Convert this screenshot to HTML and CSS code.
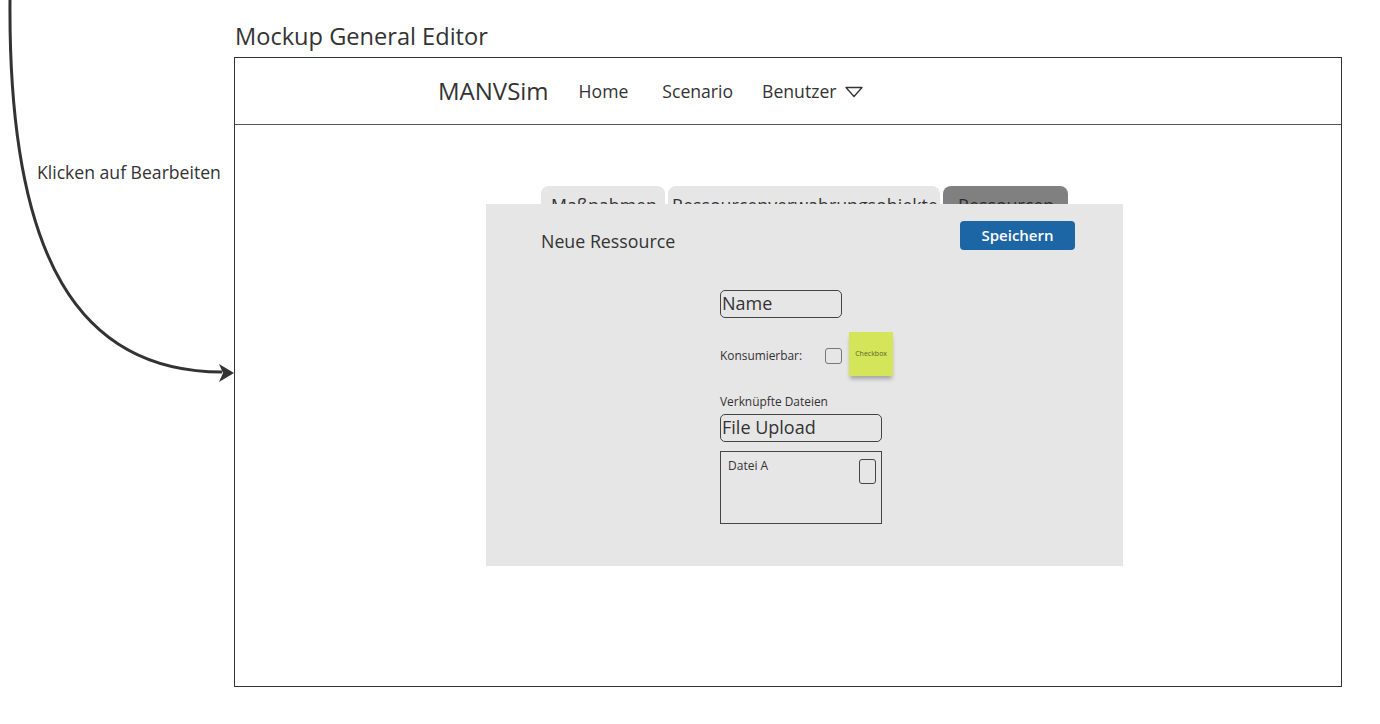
FILE: index.html
```html
<!DOCTYPE html>
<html lang="de">
<head>
<meta charset="utf-8">
<title>Mockup General Editor</title>
<link rel="stylesheet" href="styles.css">
</head>
<body>
<div class="canvas">
  <svg class="arrow" width="240" height="390" viewBox="0 0 240 390">
    <path d="M10 0 C 8 260, 80 372, 222 372" fill="none" stroke="#333" stroke-width="3"/>
    <path d="M234 373 L219 364 L223 373 L219 382 Z" fill="#333"/>
  </svg>
  <div class="note-label">Klicken auf Bearbeiten</div>
  <div class="title">Mockup General Editor</div>

  <div class="frame">
    <header class="topbar">
      <nav class="nav">
        <span class="brand">MANVSim</span>
        <span class="nav-item">Home</span>
        <span class="nav-item">Scenario</span>
        <span class="nav-item dropdown">Benutzer
          <svg class="caret" width="18" height="12" viewBox="0 0 18 12"><path d="M1 1.5 H17 L9 10.5 Z" fill="none" stroke="#333" stroke-width="1.3" stroke-linejoin="round"/></svg>
        </span>
      </nav>
    </header>

    <main class="content">
      <div class="editor">
        <div class="tabs">
          <div class="tab tab-1">Maßnahmen</div>
          <div class="tab tab-2">Ressourcenverwahrungsobjekte</div>
          <div class="tab tab-3 active">Ressourcen</div>
        </div>
        <section class="panel">
          <div class="panel-head">
            <h2 class="panel-title">Neue Ressource</h2>
            <button class="btn-save">Speichern</button>
          </div>
          <div class="form">
            <div class="input name-input">Name</div>
            <div class="check-row">
              <span class="small-label">Konsumierbar:</span>
              <span class="checkbox"></span>
              <span class="sticky">Checkbox</span>
            </div>
            <div class="small-label files-label">Verknüpfte Dateien</div>
            <div class="input upload-input">File Upload</div>
            <div class="file-list">
              <span class="file-name">Datei A</span>
              <span class="file-toggle"></span>
            </div>
          </div>
        </section>
      </div>
    </main>
  </div>
</div>
</body>
</html>
```

FILE: styles.css
```css
* { box-sizing: border-box; }

html, body {
  margin: 0;
  padding: 0;
  background: #fff;
}

body {
  font-family: "Open Sans", "Noto Sans", "Liberation Sans", sans-serif;
  color: #333;
}

.canvas {
  position: relative;
  width: 1380px;
  height: 724px;
  overflow: hidden;
}

.arrow {
  position: absolute;
  left: 0;
  top: 0;
}

.note-label {
  position: absolute;
  left: 37px;
  top: 160px;
  font-size: 17.6px;
  line-height: 24px;
  color: #333;
}

.title {
  position: absolute;
  left: 235px;
  top: 20px;
  font-size: 23.6px;
  line-height: 32px;
  color: #333;
}

.frame {
  position: absolute;
  left: 234px;
  top: 57px;
  width: 1108px;
  height: 630px;
  border: 1px solid #333;
  display: flex;
  flex-direction: column;
}

.topbar {
  height: 67px;
  border-bottom: 1px solid #555;
  display: flex;
  align-items: center;
  padding-left: 203px;
}

.nav {
  display: flex;
  align-items: center;
}

.brand {
  font-size: 24px;
  line-height: 32px;
  color: #333;
  margin-right: 30px;
}

.nav-item {
  font-size: 17.6px;
  line-height: 24px;
  color: #333;
}

.nav-item:nth-child(2) { margin-right: 34px; }
.nav-item:nth-child(3) { margin-right: 29px; }

.dropdown {
  display: flex;
  align-items: center;
  gap: 9px;
}

.caret { margin-top: 1px; }

.content {
  flex: 1;
  padding-top: 61px;
  padding-left: 251px;
}

.editor {
  width: 637px;
}

.tabs {
  display: flex;
  gap: 3px;
  padding-left: 55px;
  height: 18px;
}

.tab {
  height: 18px;
  overflow: hidden;
  border-radius: 8px 8px 0 0;
  background: #e6e6e6;
  font-size: 17.8px;
  line-height: 22px;
  padding-top: 8px;
  white-space: nowrap;
  color: #333;
}

.tab-1 { width: 124px; padding-left: 10px; }
.tab-2 { width: 272px; padding-left: 4px; }
.tab-3 { width: 125px; padding-left: 15px; background: #808080; color: #2b2b2b; }

.panel {
  background: #e6e6e6;
  height: 362px;
}

.panel-head {
  display: flex;
  justify-content: space-between;
  align-items: flex-start;
  padding: 17px 48px 0 55px;
  height: 86px;
}

.panel-title {
  margin: 9px 0 0;
  font-size: 17.8px;
  font-weight: 400;
  line-height: 22px;
  color: #333;
}

.btn-save {
  width: 115px;
  height: 29px;
  border: none;
  border-radius: 4px;
  background: #1d66a6;
  color: #fff;
  font-family: inherit;
  font-size: 15px;
  font-weight: 600;
  line-height: 20px;
  padding: 0 0 1px;
  cursor: pointer;
}

.form {
  margin-left: 234px;
  display: flex;
  flex-direction: column;
  align-items: flex-start;
}

.input {
  border: 1.5px solid #444;
  border-radius: 5px;
  font-size: 18px;
  line-height: 24px;
  padding-left: 1px;
  color: #333;
}

.name-input {
  width: 122px;
  height: 28px;
}

.check-row {
  display: flex;
  align-items: center;
  margin-top: 14px;
  height: 46px;
}

.small-label {
  font-size: 11.9px;
  line-height: 14px;
  color: #333;
}

.checkbox {
  width: 17px;
  height: 16px;
  border: 1px solid #777;
  border-radius: 3px;
  margin-left: 23px;
  margin-top: 1px;
}

.sticky {
  width: 44px;
  height: 44px;
  margin-left: 7px;
  margin-top: -2px;
  background: #d5e55a;
  font-size: 7px;
  line-height: 10px;
  color: #55652a;
  display: flex;
  align-items: center;
  justify-content: center;
  box-shadow: 0 4px 4px -1px rgba(0,0,0,0.28);
}

.files-label {
  margin-top: 16px;
}

.upload-input {
  width: 162px;
  height: 28px;
  margin-top: 6px;
}

.file-list {
  margin-top: 9px;
  width: 162px;
  height: 73px;
  border: 1px solid #444;
  display: flex;
  justify-content: space-between;
  align-items: flex-start;
  padding: 6px 5px 0 7px;
}

.file-name {
  font-size: 12px;
  line-height: 16px;
  color: #333;
}

.file-toggle {
  width: 17px;
  height: 25px;
  border: 1px solid #444;
  border-radius: 3px;
  margin-top: 1px;
}
```
